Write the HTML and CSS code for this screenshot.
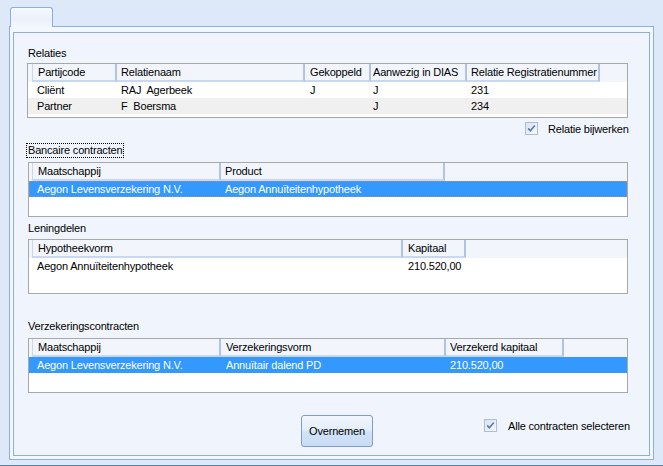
FILE: index.html
```html
<!DOCTYPE html>
<html>
<head>
<meta charset="utf-8">
<link rel="stylesheet" href="styles.css">
</head>
<body>
<div class="window">
  <div class="tab"></div>
  <div class="tabpage">
    <div class="panel">
      <div class="label lbl-relaties">Relaties</div>
      <div class="grid grid-relaties">
        <div class="ghead">
          <div class="hc r1">Partijcode</div>
          <div class="hc r2">Relatienaam</div>
          <div class="hc r3">Gekoppeld</div>
          <div class="hc r4">Aanwezig in DIAS</div>
          <div class="hc r5">Relatie Registratienummer</div>
        </div>
        <div class="grow">
          <div class="gc r1">Cliënt</div>
          <div class="gc r2">RAJ  Agerbeek</div>
          <div class="gc r3">J</div>
          <div class="gc r4">J</div>
          <div class="gc r5">231</div>
        </div>
        <div class="grow alt">
          <div class="gc r1">Partner</div>
          <div class="gc r2">F  Boersma</div>
          <div class="gc r3"></div>
          <div class="gc r4">J</div>
          <div class="gc r5">234</div>
        </div>
      </div>

      <div class="checkrow check-relatie">
        <svg class="cb" width="13" height="13" viewBox="0 0 13 13"><defs><linearGradient id="cbg" x1="0" y1="0" x2="1" y2="1"><stop offset="0" stop-color="#d9e2ef"/><stop offset="1" stop-color="#f6f8fc"/></linearGradient></defs><rect x="0.5" y="0.5" width="12" height="12" fill="url(#cbg)" stroke="#aebed6"/><path d="M3.2 6.4 L5.4 8.8 L9.8 3.6" fill="none" stroke="#5d79a4" stroke-width="1.6"/></svg>
        <span>Relatie bijwerken</span>
      </div>

      <div class="label label-focus">Bancaire contracten</div>
      <div class="grid grid-bank">
        <div class="ghead">
          <div class="hc b1">Maatschappij</div>
          <div class="hc b2">Product</div>
        </div>
        <div class="grow sel focus">
          <div class="gc b1">Aegon Levensverzekering N.V.</div>
          <div class="gc b2">Aegon Annuïteitenhypotheek</div>
        </div>
      </div>

      <div class="label lbl-lening">Leningdelen</div>
      <div class="grid grid-lening">
        <div class="ghead">
          <div class="hc l1">Hypotheekvorm</div>
          <div class="hc l2">Kapitaal</div>
        </div>
        <div class="grow">
          <div class="gc l1">Aegon Annuïteitenhypotheek</div>
          <div class="gc l2">210.520,00</div>
        </div>
      </div>

      <div class="label lbl-verz">Verzekeringscontracten</div>
      <div class="grid grid-verz">
        <div class="ghead">
          <div class="hc v1">Maatschappij</div>
          <div class="hc v2">Verzekeringsvorm</div>
          <div class="hc v3">Verzekerd kapitaal</div>
        </div>
        <div class="grow sel">
          <div class="gc v1">Aegon Levensverzekering N.V.</div>
          <div class="gc v2">Annuïtair dalend PD</div>
          <div class="gc v3">210.520,00</div>
        </div>
      </div>

      <div class="bottom">
        <button class="btn">Overnemen</button>
        <div class="checkrow check-alle">
          <svg class="cb" width="13" height="13" viewBox="0 0 13 13"><defs><linearGradient id="cbg2" x1="0" y1="0" x2="1" y2="1"><stop offset="0" stop-color="#d9e2ef"/><stop offset="1" stop-color="#f6f8fc"/></linearGradient></defs><rect x="0.5" y="0.5" width="12" height="12" fill="url(#cbg2)" stroke="#aebed6"/><path d="M3.2 6.4 L5.4 8.8 L9.8 3.6" fill="none" stroke="#5d79a4" stroke-width="1.6"/></svg>
          <span>Alle contracten selecteren</span>
        </div>
      </div>
    </div>
  </div>
</div>
</body>
</html>
```

FILE: styles.css
```css
html, body {
  margin: 0;
  padding: 0;
}

body {
  background: #dde8f8;
  font-family: "Liberation Sans", Arial, sans-serif;
  font-size: 11px;
  letter-spacing: -0.18px;
  color: #000;
}

.window {
  box-sizing: border-box;
  width: 663px;
  height: 466px;
  padding: 7px 0 0 9px;
  border-bottom: 1px solid #5f7fb2;
}

.tab {
  position: relative;
  z-index: 1;
  box-sizing: border-box;
  width: 43px;
  height: 20px;
  margin-left: 1px;
  margin-bottom: -1px;
  border: 1px solid #8eafdd;
  border-bottom: none;
  border-radius: 3px 3px 0 0;
  background: linear-gradient(to bottom, #f6f9fe 0%, #ebf1fb 60%, #f3f7fe 100%);
}

.tabpage {
  box-sizing: border-box;
  width: 645px;
  height: 434px;
  padding: 5px 3px 3px 3px;
  border: 1px solid #8eafdd;
  background: #f3f7fe;
}

.panel {
  box-sizing: border-box;
  width: 637px;
  height: 424px;
  border: 1px solid #8eafdd;
  background: #f0f5fd;
  padding: 0 21px 0 14px;
  display: flex;
  flex-direction: column;
  align-items: flex-start;
}

.label {
  height: 13px;
  line-height: 13px;
  white-space: nowrap;
}

.lbl-relaties { margin-top: 14px; }
.lbl-lening { margin-top: 5px; }
.lbl-verz { margin-top: 26px; }

.label-focus {
  margin-top: 8px;
  margin-left: -2px;
  padding: 0 1px;
  border: 1px dotted #000;
}

/* grids */
.grid {
  box-sizing: border-box;
  width: 600px;
  height: 55px;
  border: 1px solid #a8a8a8;
  background: #fff;
  overflow: hidden;
}

.grid-relaties { margin-top: 3px; margin-left: -1px; width: 601px; }
.grid-bank { margin-top: 4px; }
.grid-lening { margin-top: 4px; }
.grid-verz { margin-top: 5px; }

.ghead {
  display: flex;
  height: 18px;
  padding-left: 3px;
  background: #f2f6fc;
}

.grid-relaties .ghead,
.grid-relaties .grow { padding-left: 4px; }

.hc {
  box-sizing: border-box;
  height: 18px;
  line-height: 16px;
  white-space: nowrap;
  overflow: hidden;
  border-right: 2px solid #afc4e4;
  border-bottom: 2px solid #c8d8ef;
}

.hc:first-child { border-left: 1px solid #c8d8ef; }

.grow {
  display: flex;
  height: 16px;
  line-height: 16px;
  padding-left: 3px;
}

.grow.alt { background: #f0f0f0; }

.grow.sel {
  background: #3399ff;
  color: #fff;
}

.grow.focus {
  outline: 1px dotted #9a8f98;
  outline-offset: -1px;
}

.gc {
  box-sizing: border-box;
  white-space: pre;
  overflow: hidden;
}

/* Relaties columns */
.r1 { width: 85px; padding-left: 5px; }
.r2 { width: 188px; padding-left: 4px; }
.r3 { width: 66px; padding-left: 5px; }
.r4 { width: 96px; padding-left: 2px; }
.r5 { width: 133px; padding-left: 4px; }

/* Bancaire columns */
.b1 { width: 189px; padding-left: 5px; }
.b2 { width: 224px; padding-left: 4px; }

/* Leningdelen columns */
.l1 { width: 371px; padding-left: 5px; }
.l2 { width: 63px; padding-left: 5px; }

/* Verzekering columns */
.v1 { width: 189px; padding-left: 5px; }
.v2 { width: 225px; padding-left: 5px; }
.v3 { width: 118px; padding-left: 4px; }

/* checkboxes */
.checkrow {
  display: flex;
  align-items: center;
  height: 13px;
  white-space: nowrap;
}

.cb { display: block; flex: none; }

.check-relatie {
  margin-top: 4px;
  margin-left: 497px;
  gap: 10px;
}

.check-alle {
  margin-top: 4px;
  margin-left: 111px;
  gap: 11px;
}

.bottom {
  display: flex;
  align-items: flex-start;
  margin-top: 22px;
}

.btn {
  box-sizing: border-box;
  width: 72px;
  height: 32px;
  margin: 0 0 0 273px;
  padding: 0;
  border: 1px solid #7c9cca;
  border-radius: 3px;
  background: linear-gradient(to bottom, #f3f7fd 0%, #e3edfa 45%, #d1e2f7 55%, #c9dcf5 100%);
  font-family: "Liberation Sans", Arial, sans-serif;
  font-size: 11px;
  letter-spacing: -0.18px;
  color: #000;
}
```
